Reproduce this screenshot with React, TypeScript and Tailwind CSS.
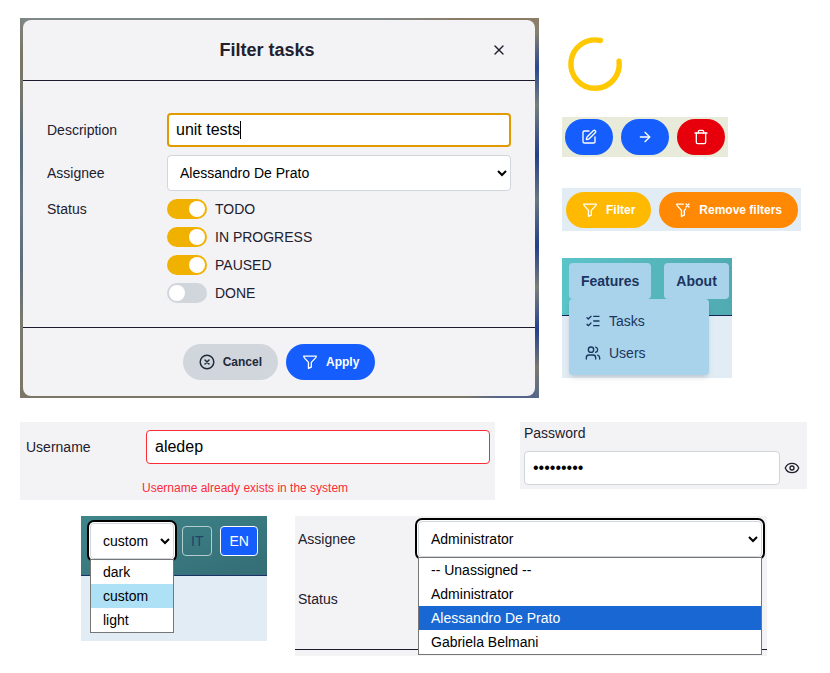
import React, { useState } from "react";
import type { ReactNode } from "react";
import { ArrowRight, Eye, ListChecks, SquarePen, Trash, Users, X } from "lucide-react";

function FunnelIcon() {
  return (
    <svg viewBox="0 0 24 24" className="size-4" fill="none" stroke="currentColor" strokeWidth="2" strokeLinecap="round" strokeLinejoin="round" aria-hidden="true">
      <path d="M2.5 3.2h19l-.8 2.2-6.7 7.2v7L9.7 21.7v-9.1L3.3 5.4z" />
    </svg>
  );
}

function FunnelOffIcon() {
  return (
    <svg viewBox="0 0 24 24" className="size-4" fill="none" stroke="currentColor" strokeWidth="2" strokeLinecap="round" strokeLinejoin="round" aria-hidden="true">
      <path d="M12.5 3.2h-10l.8 2.2 6.4 7.2v9.1l4.3-2.1v-7l2-2.2" />
      <path d="M16.5 3l4.5 4.5M21 3l-4.5 4.5" />
    </svg>
  );
}

function CircleCrossIcon() {
  return (
    <svg viewBox="0 0 24 24" className="size-4" fill="none" stroke="currentColor" strokeWidth="2.2" strokeLinecap="round" aria-hidden="true">
      <circle cx="12" cy="12" r="10.2" />
      <path d="M9 9l6 6M15 9l-6 6" />
    </svg>
  );
}

function Pill({ tone, children, label }: { tone: string; children: ReactNode; label?: string }) {
  return (
    <button type="button" aria-label={label} className={`flex h-9 items-center gap-2 rounded-full px-4 text-xs font-bold whitespace-nowrap ${tone}`}>
      {children}
    </button>
  );
}

function Toggle({ label, initial }: { label: string; initial: boolean }) {
  const [on, setOn] = useState(initial);
  return (
    <label className="flex items-center gap-2">
      <input
        type="checkbox"
        checked={on}
        onChange={() => setOn(!on)}
        className="h-5 w-10 appearance-none rounded-full bg-gray-300 p-0.5 before:block before:size-4 before:rounded-full before:bg-white checked:bg-[#f0b100] checked:pl-[22px]"
      />
      {label}
    </label>
  );
}

function OptionList({ label, options, active, highlight }: { label: string; options: string[]; active: string; highlight: string }) {
  return (
    <ul role="listbox" aria-label={label} className="absolute inset-x-0 top-full z-10 border border-[#767676] bg-white text-sm text-black">
      {options.map((o) => (
        <li key={o} role="option" aria-selected={o === active} className={`flex h-6 items-center px-3 ${o === active ? highlight : ""}`}>
          {o}
        </li>
      ))}
    </ul>
  );
}

const selectBase = "h-9 w-full rounded-sm border border-gray-300 bg-white px-2 text-sm text-black outline-none";
const selectOpen = "shadow-[0_0_0_1px_#ffffff,0_0_0_3px_#000000]";
const people = ["-- Unassigned --", "Administrator", "Alessandro De Prato", "Gabriela Belmani"];

function FilterDialog() {
  return (
    <section className="min-w-0 flex-1 pt-0.5 pr-1 pb-0.5 pl-[3px] [background:linear-gradient(to_bottom,#7f8683,#7a7563_10%,#75776d_20%,#566b7c_34%,#6b7784_50%,#5d6d7c_65%,#7a7a6e_80%,#7a7668)_left/3px_100%_no-repeat,linear-gradient(to_bottom,#8d7e68,#857f70_4%,#2a4892_13%,#777f7c_23%,#22408c_36%,#6a7880_48%,#22408c_60%,#7b7f7a_71%,#23408f_82%,#7a7a70_92%,#55678a)_right/4px_100%_no-repeat,linear-gradient(to_right,#7f8787_70%,#8a7c66_85%)_top/100%_10px_no-repeat,linear-gradient(to_right,#7a7668_86%,#55658a_92%)_bottom/100%_10px_no-repeat]">
      <form role="dialog" aria-labelledby="dialog-title" className="rounded-lg bg-[#f3f3f6]">
        <header className="flex h-[61px] items-center border-b border-[#1e1a2e] px-6">
          <h1 id="dialog-title" className="flex-1 text-center text-lg font-bold">Filter tasks</h1>
          <button type="button" aria-label="Close" className="flex size-6 items-center justify-center">
            <X size={16} />
          </button>
        </header>
        <div className="grid grid-cols-[120px_1fr] items-center gap-y-2 border-b border-[#1e1a2e] px-6 pt-8 pb-6">
          <label htmlFor="description">Description</label>
          <div className="relative">
            <input id="description" type="text" defaultValue="unit tests" className="h-[34px] w-full rounded-sm border-2 border-[#e19a00] bg-white px-[7px] text-base text-black caret-transparent outline-none" />
            <span aria-hidden="true" className="absolute inset-y-2 left-[73px] w-px bg-black" />
          </div>
          <label htmlFor="assignee">Assignee</label>
          <select id="assignee" defaultValue="Alessandro De Prato" className={selectBase}>
            {people.map((p) => <option key={p}>{p}</option>)}
          </select>
          <span className="self-start">Status</span>
          <div className="flex flex-col gap-2">
            <Toggle label="TODO" initial={true} />
            <Toggle label="IN PROGRESS" initial={true} />
            <Toggle label="PAUSED" initial={true} />
            <Toggle label="DONE" initial={false} />
          </div>
        </div>
        <footer className="flex justify-center gap-2 p-4">
          <Pill tone="bg-gray-300 text-gray-800"><CircleCrossIcon />Cancel</Pill>
          <Pill tone="bg-[#155dfc] text-white"><FunnelIcon />Apply</Pill>
        </footer>
      </form>
    </section>
  );
}

function NavMenu() {
  return (
    <nav className="h-[120px] w-[170px] bg-[#e2ecf4] text-[#1b3560]">
      <div className="flex h-[58px] items-start gap-[13px] border-b border-[#162456] bg-linear-to-r from-[#5bc4c9] to-[#50abb1] pt-[5px] pl-[7px]">
        <div className="relative">
          <button type="button" aria-haspopup="menu" aria-expanded="true" className="h-9 rounded-sm bg-[#a9d3eb] px-3 font-bold">Features</button>
          <ul className="absolute top-full left-0 w-[140px] rounded-sm bg-[#a9d3eb] py-1.5 shadow-md">
            <li><a href="#tasks" className="flex h-8 items-center gap-2 px-4"><ListChecks size={16} />Tasks</a></li>
            <li><a href="#users" className="flex h-8 items-center gap-2 px-4"><Users size={16} />Users</a></li>
          </ul>
        </div>
        <button type="button" className="h-9 rounded-sm bg-[#a9d3eb] px-3 font-bold">About</button>
      </div>
    </nav>
  );
}

function Samples() {
  return (
    <aside className="flex w-[248px] flex-col items-start">
      <svg viewBox="0 0 66 66" className="mt-[13px] mb-5 size-[66px]" fill="none" role="img" aria-label="Loading">
        <path d="M38.4 9.5A24.2 24.2 0 1 0 57.1 30.2" stroke="#ffc800" strokeWidth="5.4" strokeLinecap="round" />
      </svg>
      <div className="flex gap-2 bg-[#e8ebda] px-[3px] py-0.5">
        <Pill tone="bg-[#155dfc] text-white" label="Edit"><SquarePen size={16} /></Pill>
        <Pill tone="bg-[#155dfc] text-white" label="Open"><ArrowRight size={16} /></Pill>
        <Pill tone="bg-[#e7000b] text-white" label="Delete"><Trash size={16} /></Pill>
      </div>
      <div className="mt-[31px] mb-[27px] flex gap-2 bg-[#e2ecf4] pt-1 pr-[3px] pb-[3px] pl-1">
        <Pill tone="bg-[#ffb900] text-white"><FunnelIcon />Filter</Pill>
        <Pill tone="bg-[#ff8904] text-white"><FunnelOffIcon />Remove filters</Pill>
      </div>
      <NavMenu />
    </aside>
  );
}

export default function App() {
  return (
    <main className="bg-white pt-[18px] pb-4 font-['Liberation_Sans',Arial,sans-serif] text-sm text-[#22202e]">
      <div className="flex items-start gap-[23px] px-5">
        <FilterDialog />
        <Samples />
      </div>

      <div className="mt-6 flex items-start gap-[25px] pr-[23px] pl-5">
        <section className="grid min-w-0 flex-1 grid-cols-[120px_1fr] items-center bg-[#f3f3f6] pt-2 pr-[5px] pb-1 pl-1.5">
          <label htmlFor="username">Username</label>
          <input id="username" type="text" defaultValue="aledep" aria-describedby="username-error" className="h-[34px] rounded-sm border border-[#fb2c36] bg-white px-2 text-base text-black outline-none" />
          <p id="username-error" className="col-start-2 -ml-1 mt-4 text-xs text-[#fb2c36]">Username already exists in the system</p>
        </section>
        <section className="w-[287px] bg-[#f3f3f6] px-1 pt-px pb-1">
          <label htmlFor="password">Password</label>
          <div className="mt-2 flex items-center gap-1">
            <input id="password" type="password" defaultValue="secret123" className="h-[34px] w-64 rounded-sm border border-gray-300 bg-white px-2 text-base text-black outline-none" />
            <button type="button" aria-label="Show password"><Eye size={16} /></button>
          </div>
        </section>
      </div>

      <div className="mt-4 flex items-start gap-7 pr-[63px] pl-[81px]">
        <section className="h-[125px] w-[186px] bg-[#e2ecf4]">
          <div className="flex h-[60px] items-start gap-2 border-b border-[#1c2f66] bg-linear-to-br from-[#3f868b] to-[#346d75] pt-[7px] pl-[9px]">
            <div className="relative w-[84px]">
              <select aria-label="Theme" defaultValue="custom" className={`${selectBase} ${selectOpen}`}>
                <option>dark</option>
                <option>custom</option>
                <option>light</option>
              </select>
              <OptionList label="Themes" options={["dark", "custom", "light"]} active="custom" highlight="bg-[#aee1f6]" />
            </div>
            <div className="flex h-9 items-center gap-2">
              <button type="button" className="h-[30px] rounded-sm border border-[#b4cccf] px-2 text-[#1f4468]">IT</button>
              <button type="button" className="h-[30px] rounded-sm border border-white bg-[#155dfc] px-2 text-white">EN</button>
            </div>
          </div>
        </section>
        <section className="h-[140px] min-w-0 flex-1 bg-[#f3f3f6]">
          <div className="grid h-[134px] grid-cols-[120px_1fr] content-start items-center gap-y-8 border-b border-[#1e1a2e] pt-[5px] pr-[5px] pl-[3px]">
            <label htmlFor="assignee-open">Assignee</label>
            <div className="relative">
              <select id="assignee-open" defaultValue="Administrator" className={`${selectBase} ${selectOpen}`}>
                {people.map((p) => <option key={p}>{p}</option>)}
              </select>
              <OptionList label="Assignees" options={people} active="Alessandro De Prato" highlight="bg-[#1967d2] text-white" />
            </div>
            <span>Status</span>
          </div>
        </section>
      </div>
    </main>
  );
}
